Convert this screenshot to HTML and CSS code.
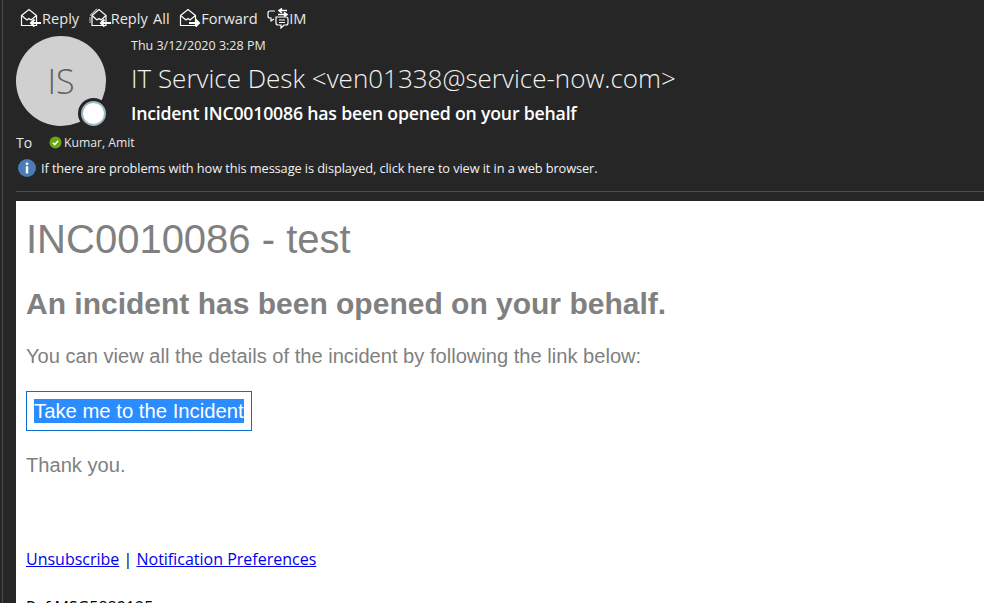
FILE: index.html
```html
<!DOCTYPE html>
<html lang="en">

<head>
    <meta charset="UTF-8">
    <meta name="viewport" content="width=device-width, initial-scale=1.0">
    <title>Incident INC0010086</title>
    <link rel="stylesheet" href="styles.css">
</head>

<body>
    <div class="window">
        <div class="header">
            <div class="toolbar">
                <span class="action">
                    <svg class="icon" width="22" height="20" viewBox="0 0 22 20" fill="none" stroke="#fff" stroke-width="1.2">
                        <path d="M1.5 7.5 L9 1.5 L16.5 7.5 V17.5 H1.5 Z" />
                        <path d="M1.5 7.5 L7 12 M16.5 7.5 L11 12 L9 10.5 L7 12" />
                        <path d="M21 15 H11 M14.5 11.5 L11 15 L14.5 18.5" stroke-width="2" stroke="#fff" />
                    </svg>
                    Reply
                </span>
                <span class="action">
                    <svg class="icon" width="22" height="20" viewBox="0 0 22 20" fill="none" stroke="#fff" stroke-width="1.2">
                        <path d="M3 7.5 L10 1.5 L17 7.5 V17.5 H3 Z" />
                        <path d="M1 9 V15 M1 7.5 L8 1" stroke="#aaa" />
                        <path d="M3 7.5 L8 12 M17 7.5 L12 12 L10 10.5 L8 12" />
                        <path d="M22 15 H12 M15.5 11.5 L12 15 L15.5 18.5" stroke-width="2" />
                    </svg>
                    Reply All
                </span>
                <span class="action">
                    <svg class="icon" width="22" height="20" viewBox="0 0 22 20" fill="none" stroke="#fff" stroke-width="1.2">
                        <path d="M1.5 7.5 L9 1.5 L16.5 7.5 V17.5 H1.5 Z" />
                        <path d="M1.5 7.5 L7 12 M16.5 7.5 L11 12 L9 10.5 L7 12" />
                        <path d="M10 15 H20 M16.5 11.5 L20 15 L16.5 18.5" stroke-width="2" />
                    </svg>
                    Forward
                </span>
                <span class="action">
                    <svg class="icon" width="22" height="21" viewBox="0 0 22 21" fill="none" stroke="#fff" stroke-width="1.2">
                        <path d="M8 3 H3 Q1 3 1 5 V8 Q1 10 3 10 H4 V13 L7 11" />
                        <path d="M20 2.5 H12 M15 0.5 L12 2.5 L15 5" stroke-width="1.6" />
                        <path d="M20 6.5 H11 M17 4.5 L20 6.5 L17 8.5" stroke-width="1.6" />
                        <path d="M9 9 H19 Q21 9 21 11 V15 Q21 17 19 17 H17 L14 20 V17 H11 Q9 17 9 15 Z" />
                        <path d="M12 12 H18 M12 14.5 H18" />
                    </svg>
                    IM
                </span>
            </div>

            <div class="summary">
                <div class="avatar">
                    <span>IS</span>
                    <div class="presence"></div>
                </div>
                <div class="meta">
                    <div class="date">Thu 3/12/2020 3:28 PM</div>
                    <div class="sender">IT Service Desk &lt;ven01338@service-now.com&gt;</div>
                    <div class="subject">Incident INC0010086 has been opened on your behalf</div>
                </div>
            </div>

            <div class="recipient">
                <span class="to">To</span>
                <svg class="status" width="13" height="13" viewBox="0 0 13 13">
                    <circle cx="6.5" cy="6.5" r="6" fill="#6ba516" />
                    <path d="M3.8 6.8 L5.7 8.6 L9.2 4.8" fill="none" stroke="#fff" stroke-width="1.5" />
                </svg>
                <span class="name">Kumar, Amit</span>
            </div>

            <div class="notice">
                <svg class="info" width="18" height="18" viewBox="0 0 18 18">
                    <circle cx="9" cy="9" r="9" fill="#4a7cb5" />
                    <circle cx="9" cy="4.8" r="1.4" fill="#fff" />
                    <rect x="7.8" y="7.2" width="2.4" height="7.2" fill="#fff" />
                </svg>
                <span>If there are problems with how this message is displayed, click here to view it in a web browser.</span>
            </div>
        </div>

        <div class="message">
            <div class="title">INC0010086 - test</div>
            <div class="lead">An incident has been opened on your behalf.</div>
            <p class="text">You can view all the details of the incident by following the link below:</p>
            <div class="button-box"><span class="button-label">Take me to the Incident</span></div>
            <p class="text thanks">Thank you.</p>
            <div class="links">
                <a href="#">Unsubscribe</a> | <a href="#">Notification Preferences</a>
            </div>
            <div class="ref">Ref:MSG5889125</div>
        </div>
    </div>
</body>

</html>
```

FILE: styles.css
```css
html,
body {
    height: 100%;
}

body {
    margin: 0;
    overflow: hidden;
    background-color: #262626;
    font-family: "Open Sans", "Noto Sans", sans-serif;
}

.window {
    height: 603px;
    box-sizing: border-box;
    margin-left: 2px;
    padding-left: 13px;
    border-left: 1px solid #4a4a4a;
    display: flex;
    flex-direction: column;
    overflow: hidden;
}

.header {
    height: 191px;
    flex-shrink: 0;
    border-bottom: 1px solid #4d4d4d;
    margin-bottom: 9px;
    color: #fff;
}

.toolbar {
    display: flex;
    align-items: center;
    height: 36px;
    padding-left: 4px;
    gap: 9.5px;
    font-size: 14.6px;
    word-spacing: 1.5px;
    color: #e6e6e6;
}

.action {
    display: flex;
    align-items: center;
    gap: 0;
}

.icon {
    flex-shrink: 0;
}

.summary {
    display: flex;
    height: 90px;
}

.avatar {
    position: relative;
    width: 90px;
    height: 90px;
    border-radius: 50%;
    background-color: #d0d0d0;
    color: #5f5f5f;
    font-size: 34px;
    font-weight: 300;
    display: flex;
    align-items: center;
    justify-content: center;
    flex-shrink: 0;
}

.presence {
    position: absolute;
    right: 0;
    bottom: 0;
    width: 21px;
    height: 21px;
    border-radius: 50%;
    background-color: #fff;
    border: 2px solid #9db8c4;
    box-shadow: 0 0 0 3px #262626;
}

.meta {
    margin-left: 25px;
    margin-top: 1px;
}

.date {
    font-size: 12.5px;
    line-height: 18px;
    color: #e8e8e8;
}

.sender {
    font-size: 26px;
    font-weight: 300;
    line-height: 32px;
    margin-top: 7px;
    color: #f2f2f2;
    white-space: nowrap;
}

.subject {
    font-size: 17.7px;
    font-weight: 600;
    line-height: 24px;
    margin-top: 7px;
    letter-spacing: -0.2px;
    white-space: nowrap;
}

.recipient {
    display: flex;
    align-items: center;
    height: 20px;
    margin-top: 6px;
}

.to {
    font-size: 14px;
    width: 33px;
    color: #e6e6e6;
}

.status {
    margin-right: 2px;
}

.name {
    font-size: 12.2px;
    line-height: 20px;
    padding-top: 1px;
    color: #e6e6e6;
}

.notice {
    display: flex;
    align-items: center;
    gap: 5px;
    height: 20px;
    margin-top: 6px;
    padding-left: 2px;
    font-size: 12.8px;
    letter-spacing: -0.1px;
    color: #f2f2f2;
    white-space: nowrap;
}

.message {
    flex: 1;
    background-color: #fff;
    padding-left: 10px;
    font-family: "Liberation Sans", Arial, sans-serif;
    color: #808080;
    overflow: hidden;
}

.title {
    font-size: 40px;
    line-height: 46px;
    margin-top: 15px;
}

.lead {
    font-size: 30px;
    font-weight: bold;
    line-height: 32px;
    margin-top: 26px;
}

.text {
    font-size: 20.13px;
    line-height: 24px;
    margin: 24px 0 0;
}

.button-box {
    display: inline-block;
    margin-top: 23px;
    padding: 7px;
    border: 1px solid #0b6fce;
    font-size: 20.3px;
    line-height: 24px;
}

.button-label {
    display: block;
    background-color: #2b8cff;
    color: #fff;
    height: 24px;
    white-space: nowrap;
}

.thanks {
    margin-top: 22px;
}

.links {
    margin-top: 72px;
    font-family: "Open Sans", "Noto Sans", sans-serif;
    font-size: 16px;
    line-height: 20px;
    color: #000;
}

.links a {
    color: #0000ee;
}

.ref {
    margin-top: 28px;
    font-family: "Open Sans", "Noto Sans", sans-serif;
    font-size: 16px;
    line-height: 20px;
    color: #000;
}
```
